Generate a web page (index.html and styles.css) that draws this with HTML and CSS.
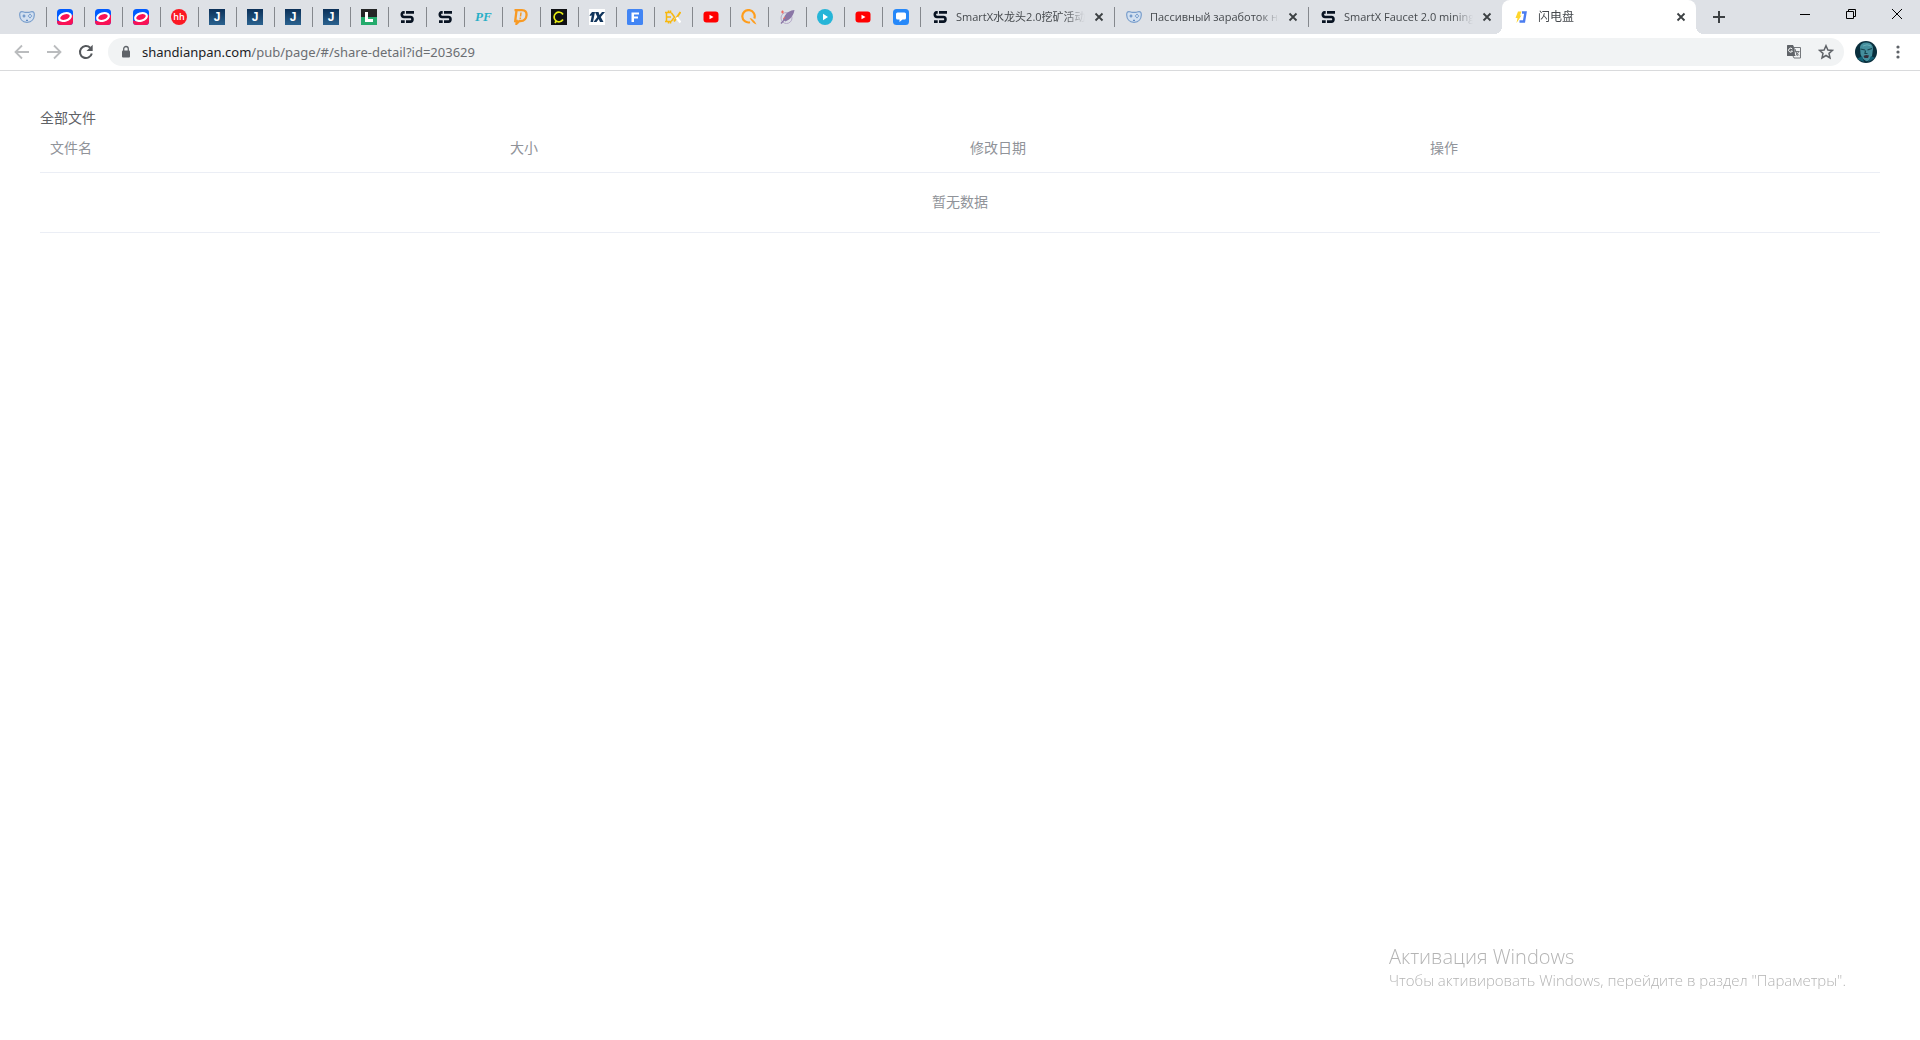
FILE: index.html
```html
<!DOCTYPE html>
<html lang="zh-CN">
<head>
<meta charset="utf-8">
<meta name="viewport" content="width=device-width, initial-scale=1">
<title>闪电盘</title>
<link rel="stylesheet" href="styles.css">
</head>
<body>
<svg class="sprite" aria-hidden="true">
  <symbol id="i-pad" viewBox="0 0 16 16"><path d="M3 2.600C4.500 2.600 5 3.400 6 3.400H10C11 3.400 11.500 2.600 13 2.600C14.800 2.600 15.400 4 15.300 6C15.200 9.500 13 13.300 8 13.300C3 13.300 .8 9.500 .7 6C.6 4 1.200 2.600 3 2.600Z" fill="#d3e0f0" stroke="#789dcb" stroke-width="1.200"/><path d="M3.500 7H6.500M5 5.500V8.500M7 11.300H9" stroke="#5f8ac2" stroke-width="1.200"/><circle cx="11" cy="5.500" r=".8" fill="#5f8ac2"/><circle cx="11" cy="8.500" r=".8" fill="#5f8ac2"/><circle cx="9.500" cy="7" r=".7" fill="#5f8ac2"/><circle cx="12.500" cy="7" r=".7" fill="#5f8ac2"/></symbol>
  <symbol id="i-ring" viewBox="0 0 16 16"><rect width="16" height="16" rx="3.500" fill="#005bff"/><path d="M0 11.500C5 14 12 10 16 5.500V12.500A3.500 3.500 0 0 1 12.500 16H3.500A3.500 3.500 0 0 1 0 12.500Z" fill="#f91155"/><ellipse cx="8" cy="8" rx="6" ry="3.700" transform="rotate(-18 8 8)" fill="#f91155" stroke="#fff" stroke-width="2.200"/></symbol>
  <symbol id="i-l" viewBox="0 0 16 16"><path d="M0 0H16V8H0Z" fill="#242526"/><path d="M0 8H16V16H0Z" fill="#24ab6c"/><path d="M4 3H7V10H12V13H4Z" fill="#fff"/></symbol>
  <symbol id="i-s" viewBox="0 0 16 16"><path d="M7 3.400H15M5.700 3.400H4.500Q2.800 3.400 2.800 5.600Q2.800 8 5 8H11.500Q13.500 8 13.500 10.300Q13.500 12.600 11.500 12.600H7M2 12.600H5.700" fill="none" stroke="#081322" stroke-width="2.600"/></symbol>
  <symbol id="i-d" viewBox="0 0 16 16"><path d="M1.500 1.200H9Q14 1.200 13.500 6.500Q13 12 7.500 12H6.500L3.500 14.800L3.700 12H2.200L3.500 1.500" fill="none" stroke="#f89a24" stroke-width="2.300"/><path d="M8 3.500L7.500 7.500M7.300 8.500V10" stroke="#f89a24" stroke-width="1.500"/></symbol>
  <symbol id="i-c" viewBox="0 0 16 16"><rect width="16" height="16" fill="#101114"/><path d="M12 5.500A4.800 4.800 0 1 0 12 10.500M5.500 11.500L4 14" fill="none" stroke="#e8ed13" stroke-width="1.700"/></symbol>
  <symbol id="i-1x" viewBox="0 0 16 16"><rect width="16" height="16" fill="#fff"/><path d="M1 5.500L3 3H6L4 13H1.500L2.800 6.500L.5 7ZM6 3H9.500L10.500 6L13 3H16L11.800 8L14.500 13H11L9.700 10L7.500 13H4.500L8.300 8Z" fill="#12365d"/></symbol>
  <symbol id="i-f" viewBox="0 0 16 16"><rect width="16" height="16" rx="1.500" fill="#4285f4"/><path d="M4.500 3.500H12V5.500H7V7.500H11V9.500H7V13H4.500Z" fill="#fff"/></symbol>
  <symbol id="i-ex" viewBox="0 0 16 16"><path d="M0 3.500H6.500M1 8H6M0 12.500H6.500M1.500 3V13M3.500 1.500V3M5.500 1.500V3M3.500 13V14.500M5.500 13V14.500M6.500 4L9.500 8L6.500 12" stroke="#f8b80d" stroke-width="1.500" fill="none"/><path d="M9 12.500L15.500 3" stroke="#f8b80d" stroke-width="2"/><path d="M11.500 8.500L15.500 13.500" stroke="#fff" stroke-width="2.400"/></symbol>
  <symbol id="i-yt" viewBox="0 0 16 16"><rect x=".5" y="2.500" width="15" height="11" rx="3" fill="#f00"/><path d="M6.500 5.700L10.500 8L6.500 10.300Z" fill="#fff"/></symbol>
  <symbol id="i-q" viewBox="0 0 16 16"><path d="M9 13.300A6.200 6.200 0 1 1 13.300 9.500" fill="none" stroke="#ff9d1c" stroke-width="2.200"/><path d="M8.500 9Q12.500 9.500 15.500 15.500Q12 14.500 8.500 9Z" fill="#ff9d1c"/></symbol>
  <symbol id="i-rocket" viewBox="0 0 16 16"><circle cx="7.500" cy="9" r="5.500" fill="none" stroke="#b5a8c8"/><path d="M15.500 1Q9 1.500 6 6.500L4 10.500L6.500 12.500L10 10.500Q14.500 7 15.500 1Z" fill="#8a76a6"/><path d="M6 10L2 14.500" stroke="#8a76a6" stroke-width="1.300"/><path d="M2 3H5M3.500 1.500V4.500M6 8L4.500 10" stroke="#ed6b65" stroke-width="1.200"/></symbol>
  <symbol id="i-play" viewBox="0 0 16 16"><circle cx="8" cy="8" r="8" fill="#26b5d8"/><path d="M6 4.700L11 8L6 11.300Z" fill="#fff"/></symbol>
  <symbol id="i-chat" viewBox="0 0 16 16"><rect width="16" height="16" rx="3.500" fill="#2688f9"/><path d="M4.500 3.500H11.500Q13 3.500 13 5V9Q13 10.500 11.500 10.500H9.500L6.500 13V10.500H4.500Q3 10.500 3 9V5Q3 3.500 4.500 3.500Z" fill="#fff"/></symbol>
  <symbol id="i-bolt" viewBox="0 0 16 16"><path d="M4 2.500H7.500L6 6.500H7.500L2.500 14L3.500 9H1.500Z" fill="#ffd62b"/><path d="M8 3.500H11.500L10 12.500H5.500" fill="none" stroke="#4b7df0" stroke-width="2.400"/></symbol>
  <symbol id="i-x" viewBox="0 0 16 16"><path d="M4.500 4.500L11.500 11.500M11.500 4.500L4.500 11.500" stroke="#3c4043" stroke-width="1.800"/></symbol>
</svg>

<header class="browser">
  <div class="tabstrip">
    <nav class="tabs" aria-label="Tabs">
      <button class="pin" aria-label="Tab 1"><svg class="icon"><use href="#i-pad"/></svg></button>
      <button class="pin" aria-label="Tab 2"><svg class="icon"><use href="#i-ring"/></svg></button>
      <button class="pin" aria-label="Tab 3"><svg class="icon"><use href="#i-ring"/></svg></button>
      <button class="pin" aria-label="Tab 4"><svg class="icon"><use href="#i-ring"/></svg></button>
      <button class="pin" aria-label="Tab 5"><span class="logo logo-hh">hh</span></button>
      <button class="pin" aria-label="Tab 6"><span class="logo logo-j">J</span></button>
      <button class="pin" aria-label="Tab 7"><span class="logo logo-j">J</span></button>
      <button class="pin" aria-label="Tab 8"><span class="logo logo-j">J</span></button>
      <button class="pin" aria-label="Tab 9"><span class="logo logo-j">J</span></button>
      <button class="pin" aria-label="Tab 10"><svg class="icon"><use href="#i-l"/></svg></button>
      <button class="pin" aria-label="Tab 11"><svg class="icon"><use href="#i-s"/></svg></button>
      <button class="pin" aria-label="Tab 12"><svg class="icon"><use href="#i-s"/></svg></button>
      <button class="pin" aria-label="Tab 13"><span class="logo logo-pf">PF</span></button>
      <button class="pin" aria-label="Tab 14"><svg class="icon"><use href="#i-d"/></svg></button>
      <button class="pin" aria-label="Tab 15"><svg class="icon"><use href="#i-c"/></svg></button>
      <button class="pin" aria-label="Tab 16"><svg class="icon"><use href="#i-1x"/></svg></button>
      <button class="pin" aria-label="Tab 17"><svg class="icon"><use href="#i-f"/></svg></button>
      <button class="pin" aria-label="Tab 18"><svg class="icon"><use href="#i-ex"/></svg></button>
      <button class="pin" aria-label="Tab 19"><svg class="icon"><use href="#i-yt"/></svg></button>
      <button class="pin" aria-label="Tab 20"><svg class="icon"><use href="#i-q"/></svg></button>
      <button class="pin" aria-label="Tab 21"><svg class="icon"><use href="#i-rocket"/></svg></button>
      <button class="pin" aria-label="Tab 22"><svg class="icon"><use href="#i-play"/></svg></button>
      <button class="pin" aria-label="Tab 23"><svg class="icon"><use href="#i-yt"/></svg></button>
      <button class="pin" aria-label="Tab 24"><svg class="icon"><use href="#i-chat"/></svg></button>
      <div class="tab">
        <button class="tab-label"><svg class="icon"><use href="#i-s"/></svg><span class="tab-text">SmartX水龙头2.0挖矿活动</span></button>
        <button class="tab-close" aria-label="Close"><svg class="icon"><use href="#i-x"/></svg></button>
      </div>
      <div class="tab">
        <button class="tab-label"><svg class="icon"><use href="#i-pad"/></svg><span class="tab-text">Пассивный заработок на</span></button>
        <button class="tab-close" aria-label="Close"><svg class="icon"><use href="#i-x"/></svg></button>
      </div>
      <div class="tab">
        <button class="tab-label"><svg class="icon"><use href="#i-s"/></svg><span class="tab-text">SmartX Faucet 2.0 mining</span></button>
        <button class="tab-close" aria-label="Close"><svg class="icon"><use href="#i-x"/></svg></button>
      </div>
      <div class="tab tab-active">
        <button class="tab-label"><svg class="icon"><use href="#i-bolt"/></svg><span class="tab-text">闪电盘</span></button>
        <button class="tab-close" aria-label="Close"><svg class="icon"><use href="#i-x"/></svg></button>
      </div>
      <button class="new-tab" aria-label="New tab"><svg class="icon" viewBox="0 0 16 16"><path d="M8 2V14M2 8H14" stroke="#3c4043" stroke-width="2"/></svg></button>
    </nav>
    <div class="window-buttons">
      <button class="win" aria-label="Minimize"><svg class="win-icon" viewBox="0 0 10 10"><path d="M0 5.500H10" stroke="#000"/></svg></button>
      <button class="win" aria-label="Restore"><svg class="win-icon" viewBox="0 0 10 10"><path d="M.5 2.500H7.500V9.500H.5ZM2.500 2.500V.5H9.500V7.500H7.500" fill="none" stroke="#000"/></svg></button>
      <button class="win" aria-label="Close window"><svg class="win-icon" viewBox="0 0 10 10"><path d="M0 0L10 10M10 0L0 10" stroke="#000"/></svg></button>
    </div>
  </div>

  <div class="toolbar">
    <button class="tool" aria-label="Back"><svg class="icon" viewBox="0 0 16 16"><path d="M15 8H2M8 1.500L1.500 8L8 14.500" fill="none" stroke="#babcbe" stroke-width="1.800"/></svg></button>
    <button class="tool" aria-label="Forward"><svg class="icon" viewBox="0 0 16 16"><path d="M1 8H14M8 1.500L14.500 8L8 14.500" fill="none" stroke="#babcbe" stroke-width="1.800"/></svg></button>
    <button class="tool" aria-label="Reload"><svg class="icon" viewBox="0 0 16 16"><path d="M13.800 9.500A6 6 0 1 1 12.200 3.800" fill="none" stroke="#55585c" stroke-width="2"/><path d="M14.700 .8V7H8.500Z" fill="#55585c"/></svg></button>
    <div class="omnibox">
      <svg class="icon" viewBox="0 0 16 16"><rect x="4" y="6.500" width="8" height="7" rx="1" fill="#5f6368"/><path d="M5.700 7V4.800A2.300 2.300 0 0 1 10.300 4.800V7" fill="none" stroke="#5f6368" stroke-width="1.300"/></svg>
      <a class="url" href="#"><span class="host">shandianpan.com</span>/pub/page/#/share-detail?id=203629</a>
      <button class="omni-button" aria-label="Translate"><svg class="icon" viewBox="0 0 16 16"><path d="M1.500 1H7L8.500 4L9 12H1.500Q1 12 1 11.500V1.500Q1 1 1.500 1Z" fill="#5f6368"/><path d="M7.500 3.500H14.500V14H8L7 12M9 5L11.500 12M9 7.500H13.500M12.700 7.500Q12 10 9.500 11.500M10.300 8.500L13 11.500" fill="none" stroke="#75787c" stroke-width="1"/><path d="M6.300 5A2 2 0 1 0 6.500 7H4.800" fill="none" stroke="#fff"/></svg></button>
      <button class="omni-button" aria-label="Bookmark"><svg class="icon" viewBox="0 0 16 16"><path d="M8 1.700L9.900 6L14.500 6.400L11 9.400L12 14L8 11.500L4 14L5 9.400L1.500 6.400L6.100 6Z" fill="none" stroke="#5f6368" stroke-width="1.500"/></svg></button>
    </div>
    <button class="avatar" aria-label="Profile"><svg class="avatar-icon" viewBox="0 0 22 22"><circle cx="11" cy="11" r="11" fill="#092f3d"/><path d="M5 6Q6 1 12 1.500Q18 2 18 8L17 15Q14 21 11 20Q7 18 5.500 13Z" fill="#458f9d"/><path d="M5.500 8L10 9M12.500 9L17 7.500M10.500 9.500L10 12.500H12.500" stroke="#17444f" stroke-width="1.200" fill="none"/><path d="M8.500 15Q11 13.500 14 14.500L13 17H9.500Z" fill="#352e3a"/><path d="M8 5Q12 2.500 16 5" stroke="#69adb8" fill="none"/><path d="M2 18L7 15L9 21M20 17L16 15L13 21" fill="#126075"/></svg></button>
    <button class="menu" aria-label="Menu"><svg class="icon" viewBox="0 0 16 16"><g fill="#5f6368"><circle cx="8" cy="3" r="1.600"/><circle cx="8" cy="8" r="1.600"/><circle cx="8" cy="13" r="1.600"/></g></svg></button>
  </div>
</header>

<main class="page">
  <h1 class="crumb">全部文件</h1>
  <table class="files">
    <thead>
      <tr><th>文件名</th><th>大小</th><th>修改日期</th><th>操作</th></tr>
    </thead>
    <tbody>
      <tr><td class="empty" colspan="4">暂无数据</td></tr>
    </tbody>
  </table>
</main>

<aside class="activation">
  <p class="activation-title">Активация Windows</p>
  <p class="activation-text">Чтобы активировать Windows, перейдите в раздел "Параметры".</p>
</aside>
</body>
</html>
```
FILE: styles.css
```css
* {
  box-sizing: border-box;
}

body {
  margin: 0;
  background: #fff;
  font-family: "Open Sans", "Noto Sans CJK SC", sans-serif;
}

button {
  margin: 0;
  padding: 0;
  border: 0;
  background: none;
  color: inherit;
  font: inherit;
  display: flex;
  align-items: center;
  justify-content: center;
}

.sprite {
  position: absolute;
  width: 0;
  height: 0;
}

.icon {
  display: block;
  flex: none;
  width: 16px;
  height: 16px;
}

/* Favicons made of letters */

.logo {
  width: 16px;
  height: 16px;
  color: #fff;
  line-height: 16px;
  text-align: center;
}

.logo-hh {
  border-radius: 8px;
  background: #fb1823;
  font-size: 9px;
  font-weight: 600;
  line-height: 15px;
}

.logo-j {
  background: linear-gradient(#0b3058, #2b628f);
  font-family: "Liberation Sans", sans-serif;
  font-size: 12px;
  font-weight: 700;
}

.logo-pf {
  color: #27afc6;
  font-family: "Liberation Serif", serif;
  font-size: 13px;
  font-style: italic;
  font-weight: 700;
}

/* Tab strip */

.tabstrip {
  display: flex;
  justify-content: space-between;
  height: 34px;
  padding-left: 8px;
  background: #dee1e6;
}

.tabs {
  display: flex;
  flex: 1;
  min-width: 0;
  height: 34px;
}

.pin,
.tab {
  background: linear-gradient(#85888d, #85888d) left center / 1px 20px no-repeat;
}

.pin {
  flex: none;
  width: 38px;
}

.pin:first-child {
  background: none;
}

.tab {
  display: flex;
  align-items: center;
  flex: 0 1 194px;
  min-width: 0;
  padding: 0 7px 0 12px;
}

.tab-label {
  flex: 1;
  min-width: 0;
  gap: 8px;
  justify-content: flex-start;
}

.tab-text {
  flex: 1;
  overflow: hidden;
  color: #45494d;
  font-size: 11px;
  line-height: 16px;
  text-align: left;
  white-space: nowrap;
  mask-image: linear-gradient(to left, transparent, #000 20px);
}

.tab-close {
  width: 16px;
  margin-left: 6px;
}

.tab-active {
  position: relative;
  border-radius: 8px 8px 0 0;
  background: #fff;
}

.tab-active .tab-text {
  font-size: 12px;
}

.tab-active::before,
.tab-active::after {
  content: "";
  position: absolute;
  bottom: 0;
  width: 8px;
  height: 8px;
}

.tab-active::before {
  right: 100%;
  background: radial-gradient(circle at 0 0, transparent 8px, #fff 8px);
}

.tab-active::after {
  left: 100%;
  background: radial-gradient(circle at 100% 0, transparent 8px, #fff 8px);
}

.new-tab {
  width: 46px;
}

.window-buttons {
  display: flex;
  flex: none;
  height: 28px;
}

.win {
  width: 46px;
}

.win-icon {
  width: 10px;
  height: 10px;
}

/* Toolbar */

.toolbar {
  display: flex;
  align-items: center;
  height: 37px;
  padding: 0 6px;
  border-bottom: 1px solid #d9dadc;
}

.tool {
  width: 32px;
  height: 32px;
}

.omnibox {
  display: flex;
  flex: 1;
  align-items: center;
  min-width: 0;
  height: 28px;
  margin-left: 6px;
  padding: 0 10px;
  border-radius: 14px;
  background: #f1f3f4;
}

.url {
  flex: 1;
  min-width: 0;
  margin-left: 8px;
  overflow: hidden;
  color: #6b6e72;
  font-family: "Noto Sans", sans-serif;
  font-size: 13px;
  line-height: 20px;
  text-decoration: none;
  white-space: nowrap;
}

.host {
  color: #202124;
}

.omni-button {
  width: 16px;
  margin-left: 16px;
}

.avatar {
  width: 22px;
  margin-left: 11px;
}

.avatar-icon {
  width: 22px;
  height: 22px;
}

.menu {
  width: 32px;
  margin-left: 5px;
}

/* File list */

.page {
  padding: 40px;
}

.crumb {
  margin: 0;
  color: #606266;
  font-size: 14px;
  font-weight: 400;
  line-height: 14px;
}

.files {
  width: 100%;
  border-collapse: separate;
  border-spacing: 0;
  table-layout: fixed;
  color: #909399;
  font-size: 14px;
  line-height: 23px;
}

.files th,
.files td {
  border-bottom: 1px solid #ebeef5;
  font-weight: 400;
}

.files th {
  padding: 11px 10px 13px;
  text-align: left;
}

.files .empty {
  padding: 17px 10px 19px;
  text-align: center;
}

/* System notice lying over the page */

.activation {
  position: fixed;
  right: 74px;
  bottom: 50px;
  color: #b4b4b4;
  font-weight: 300;
}

.activation p {
  margin: 0;
}

.activation-title {
  font-size: 20px;
  line-height: 26px;
}

.activation-text {
  font-size: 15px;
  line-height: 20px;
}
```
